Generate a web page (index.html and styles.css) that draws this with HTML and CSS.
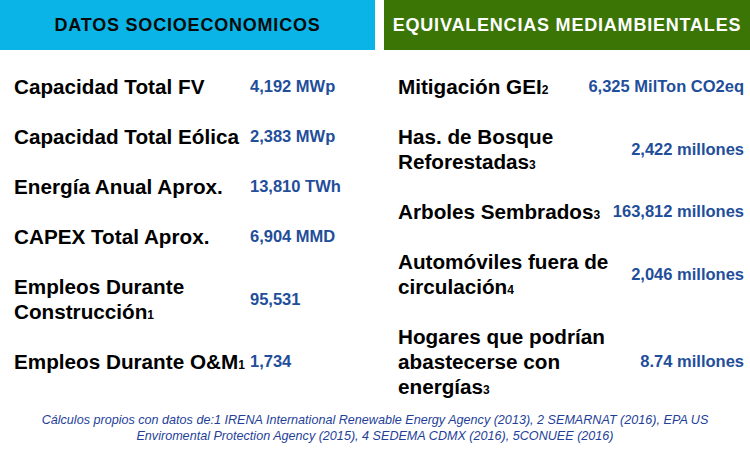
FILE: index.html
```html
<!DOCTYPE html>
<html lang="es">
<head>
<meta charset="utf-8">
<title>Datos</title>
<link rel="stylesheet" href="styles.css">
</head>
<body>
<div class="page">
  <div class="top">
    <section class="col">
      <h2 class="head head-blue">DATOS SOCIOECONOMICOS</h2>
      <div class="rows">
        <div class="row-l"><span class="label">Capacidad Total FV</span><span class="value">4,192 MWp</span></div>
        <div class="row-l"><span class="label">Capacidad Total Eólica</span><span class="value">2,383 MWp</span></div>
        <div class="row-l"><span class="label">Energía Anual Aprox.</span><span class="value">13,810 TWh</span></div>
        <div class="row-l"><span class="label">CAPEX Total Aprox.</span><span class="value">6,904 MMD</span></div>
        <div class="row-l"><span class="label">Empleos Durante Construcción<small>1</small></span><span class="value">95,531</span></div>
        <div class="row-l"><span class="label">Empleos Durante O&amp;M<small>1</small></span><span class="value">1,734</span></div>
      </div>
    </section>
    <section class="col">
      <h2 class="head head-green">EQUIVALENCIAS MEDIAMBIENTALES</h2>
      <div class="rows">
        <div class="row-r"><span class="label">Mitigación GEI<small>2</small></span><span class="value">6,325 MilTon CO2eq</span></div>
        <div class="row-r"><span class="label">Has. de Bosque Reforestadas<small>3</small></span><span class="value">2,422 millones</span></div>
        <div class="row-r"><span class="label">Arboles Sembrados<small>3</small></span><span class="value">163,812 millones</span></div>
        <div class="row-r"><span class="label">Automóviles fuera de circulación<small>4</small></span><span class="value">2,046 millones</span></div>
        <div class="row-r"><span class="label">Hogares que podrían abastecerse con energías<small>3</small></span><span class="value">8.74 millones</span></div>
      </div>
    </section>
  </div>
  <p class="foot">Cálculos propios con datos de:1 IRENA International Renewable Energy Agency (2013), 2 SEMARNAT (2016), EPA US<br>Enviromental Protection Agency (2015), 4 SEDEMA CDMX (2016), 5CONUEE (2016)</p>
</div>
</body>
</html>
```
FILE: styles.css
```css
html, body {
  margin: 0;
  padding: 0;
  background: #ffffff;
}
body {
  font-family: "Liberation Sans", Arial, sans-serif;
  color: #000000;
}
.page {
  width: 750px;
  height: 460px;
  overflow: hidden;
}
.top {
  display: grid;
  grid-template-columns: 375px 366px;
  column-gap: 9px;
}
.head {
  margin: 0;
  height: 50px;
  display: flex;
  align-items: center;
  justify-content: center;
  font-size: 18px;
  font-weight: bold;
  letter-spacing: 0.8px;
  white-space: nowrap;
}
.head-blue {
  background: #0ab4e6;
  color: #0a0a0a;
}
.head-green {
  background: #3a7506;
  color: #ffffff;
}
.rows {
  display: flex;
  flex-direction: column;
  gap: 25px;
  padding-top: 24px;
}
.label {
  font-size: 20.7px;
  font-weight: bold;
  line-height: 25px;
}
.label small {
  font-size: 12px;
  line-height: 0;
}
.value {
  font-size: 16.5px;
  font-weight: bold;
  color: #1f4e9a;
  white-space: nowrap;
}
.row-l {
  display: grid;
  grid-template-columns: 236px auto;
  align-items: center;
  padding-left: 14px;
}
.row-r {
  display: flex;
  align-items: center;
  justify-content: space-between;
  padding: 0 6px 0 14px;
}
.row-r .label {
  flex: 0 1 220px;
}
.foot {
  margin: 13px 0 0;
  text-align: center;
  font-size: 12.6px;
  font-style: italic;
  line-height: 16px;
  color: #1f3f99;
}
```
